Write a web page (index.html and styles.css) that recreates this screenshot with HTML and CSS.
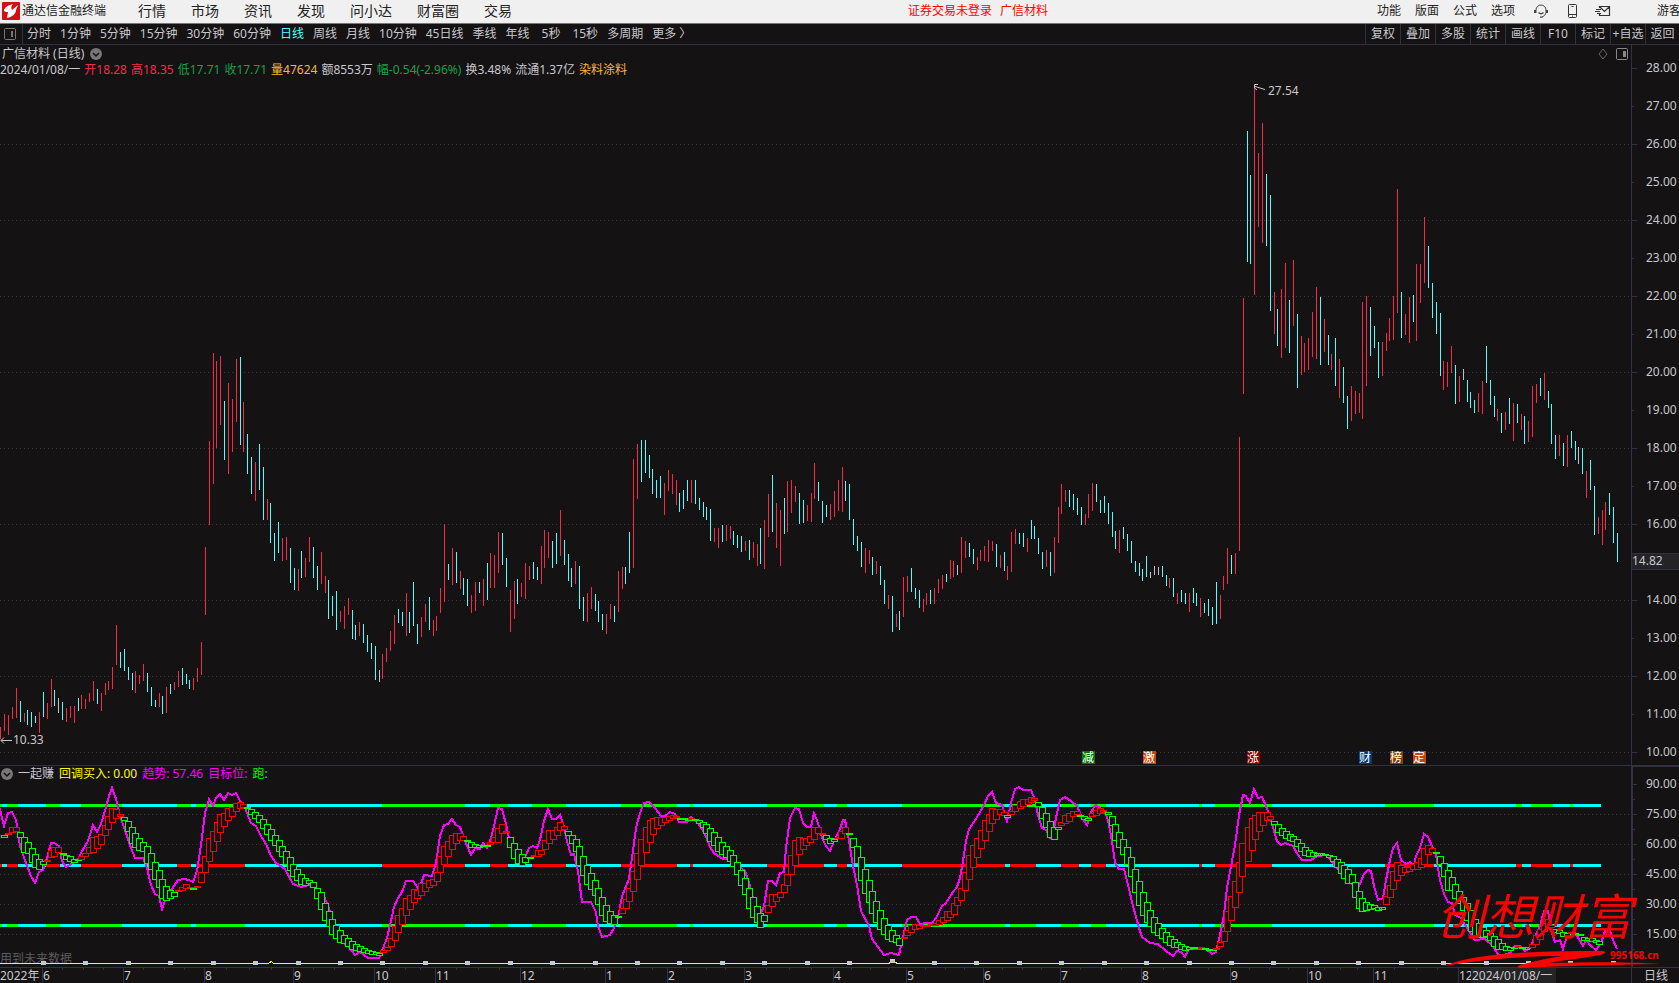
FILE: index.html
```html
<!DOCTYPE html>
<html lang="zh-CN">
<head>
  <meta charset="UTF-8">
  <meta name="viewport" content="width=device-width, initial-scale=1.0">
  <title>通达信金融终端</title>
  <link rel="stylesheet" href="styles.css">
</head>
<body>

  <header class="topbar">
    <div class="brand">
      <svg class="logo" viewBox="0 0 18 18" width="18" height="18">
        <rect width="18" height="18" rx="1" fill="#d40f14"/>
        <path d="M11 2 C7 3 3 5 2 8 C2 10 4 10 6 10 L5 16 C10 15 14 12 14 8 L16 3 L10 8 C9 6 9 4 11 2 Z" fill="#fff"/>
      </svg>
      <span>通达信金融终端</span>
    </div>
    <nav class="menu">
      <button>行情</button>
      <button>市场</button>
      <button>资讯</button>
      <button>发现</button>
      <button>问小达</button>
      <button>财富圈</button>
      <button>交易</button>
    </nav>
    <div class="status">
      <a href="#login">证券交易未登录</a>
      <a href="#stock">广信材料</a>
    </div>
    <div class="tools">
      <button>功能</button>
      <button>版面</button>
      <button>公式</button>
      <button>选项</button>
      <button class="icon first" aria-label="客服">
        <svg viewBox="0 0 16 16" width="16" height="16" fill="none" stroke="#444">
          <path d="M3 10 V7 A5 5 0 0 1 13 7 V10 Q12 13 9 14"/>
          <path d="M2 7 V10 M14 7 V10" stroke-width="2"/>
          <path d="M5.5 9.5 Q8 12 10.5 9.5 M7 14.2 H9.5" stroke-width="1.3"/>
        </svg>
      </button>
      <button class="icon" aria-label="手机">
        <svg viewBox="0 0 16 16" width="16" height="16" fill="none" stroke="#333">
          <rect x="4.5" y="1.5" width="8" height="13" rx="1"/>
          <path d="M4.5 11.5 H12.5 M7.5 3.5 H9.5 M8 13.2 H9"/>
        </svg>
      </button>
      <button class="icon" aria-label="邮件">
        <svg viewBox="0 0 16 16" width="16" height="16" fill="none" stroke="#333">
          <path d="M4.5 5 V3.5 H14.5 V12.5 H4.5 V11 M5 4 L9.5 8.5 L14 4" stroke-width="1.2"/>
          <path d="M1 6.5 H6 M0 8.5 H5 M2 10.5 H6"/>
        </svg>
      </button>
      <button class="guest">游客</button>
    </div>
  </header>

  <div class="toolbar">
    <button class="side" aria-label="侧栏">
      <svg viewBox="0 0 12 12" width="12" height="12" fill="none" stroke="#777">
        <rect x=".5" y=".5" width="11" height="11" rx="1"/>
        <rect x="7" y="3" width="2" height="6" fill="#777" stroke="none"/>
      </svg>
    </button>
    <nav class="periods">
      <button>分时</button>
      <button>1分钟</button>
      <button>5分钟</button>
      <button>15分钟</button>
      <button>30分钟</button>
      <button>60分钟</button>
      <button class="active">日线</button>
      <button>周线</button>
      <button>月线</button>
      <button>10分钟</button>
      <button>45日线</button>
      <button>季线</button>
      <button>年线</button>
      <button class="sec">5秒</button>
      <button class="sec">15秒</button>
      <button>多周期</button>
      <button>更多 〉</button>
    </nav>
    <div class="actions">
      <button>复权</button>
      <button>叠加</button>
      <button>多股</button>
      <button>统计</button>
      <button>画线</button>
      <button>F10</button>
      <button>标记</button>
      <button>+自选</button>
      <button>返回</button>
    </div>
  </div>

  <main>
    <section class="pane price">
      <svg class="chart" id="price" viewBox="0 45 1679 720"></svg>
      <div class="info">
        <div class="title">
          <span>广信材料 (日线)</span>
          <svg viewBox="0 0 12 12" width="12" height="12">
            <circle cx="6" cy="6" r="6" fill="#777"/>
            <path d="M3 5 L6 8 L9 5" fill="none" stroke="#141213" stroke-width="1.5"/>
          </svg>
        </div>
        <div class="quote">
          <span>2024/01/08/一</span>
          <span class="up">开18.28</span>
          <span class="up">高18.35</span>
          <span class="down">低17.71</span>
          <span class="down">收17.71</span>
          <span class="vol">量47624</span>
          <span>额8553万</span>
          <span class="down">幅-0.54(-2.96%)</span>
          <span>换3.48%</span>
          <span>流通1.37亿</span>
          <span class="vol">染料涂料</span>
        </div>
      </div>
      <div class="corner">
        <svg viewBox="0 0 10 12" width="10" height="12" fill="none" stroke="#666">
          <path d="M5 1 L9 6 L5 11 L1 6 Z"/>
        </svg>
        <svg viewBox="0 0 12 12" width="12" height="12" fill="none" stroke="#888">
          <rect x=".5" y=".5" width="11" height="11" rx="1"/>
          <rect x="7" y="3" width="3" height="6" fill="#888" stroke="none"/>
        </svg>
      </div>
    </section>

    <section class="pane trend">
      <svg class="chart" id="trend" viewBox="0 765 1679 218"></svg>
      <div class="legend">
        <svg viewBox="0 0 12 12" width="12" height="12">
          <circle cx="6" cy="6" r="6" fill="#777"/>
          <path d="M3 5 L6 8 L9 5" fill="none" stroke="#141213" stroke-width="1.5"/>
        </svg>
        <span>一起赚</span>
        <span class="yellow">回调买入: 0.00</span>
        <span class="magenta">趋势: 57.46</span>
        <span class="magenta">目标位:</span>
        <span class="lime">跑:</span>
      </div>
    </section>
  </main>

  <script src="chart.js"></script>
</body>
</html>
```
FILE: styles.css
```css
* {
  box-sizing: border-box;
}

body {
  margin: 0;
  height: 100vh;
  display: flex;
  flex-direction: column;
  overflow: hidden;
  background: #141213;
  color: #c8c8cc;
  font-family: "Noto Sans", "Noto Sans CJK SC", sans-serif;
  font-size: 12px;
  line-height: 16px;
}

button {
  margin: 0;
  padding: 0;
  border: none;
  background: none;
  color: inherit;
  font: inherit;
  white-space: nowrap;
  cursor: pointer;
}

svg {
  display: block;
}

/* top menu */
.topbar {
  display: flex;
  align-items: center;
  position: relative;
  flex: none;
  height: 24px;
  padding: 0 0 2px 2px;
  border-bottom: 1px solid #777;
  background: #f0f0f0;
  color: #222;
}

.brand {
  display: flex;
  align-items: center;
  gap: 2px;
}

.menu {
  display: flex;
  gap: 25px;
  margin-left: 32px;
  font-size: 14px;
}

.status {
  display: flex;
  gap: 8px;
  margin-left: 396px;
}

.status a {
  color: #f00;
  text-decoration: none;
}

.tools {
  display: flex;
  align-items: center;
  gap: 14px;
  margin-left: auto;
  margin-right: -2px;
}

.tools .first {
  margin-left: 4px;
}

.tools .icon + .icon {
  margin-left: 1px;
}

.tools .guest {
  margin-left: 32px;
}

/* period toolbar */
.toolbar {
  display: flex;
  align-items: stretch;
  flex: none;
  height: 21px;
  border-bottom: 1px solid #2f3240;
}

.side {
  width: 23px;
  padding-left: 4px;
  border-right: 1px solid #2f3240;
}

.periods {
  display: flex;
  gap: 9px;
  margin-left: 4px;
}

.periods .active {
  color: #54fcfc;
}

.periods .sec {
  padding-left: 3px;
}

.actions {
  display: flex;
  margin-left: auto;
}

.actions button {
  width: 35px;
  border-left: 1px solid #2f3240;
}

.actions button:last-child {
  width: 34px;
}

/* chart panes */
main {
  flex: 1;
  min-height: 0;
  display: flex;
  flex-direction: column;
}

.pane {
  position: relative;
  min-height: 0;
}

.price {
  flex: 720;
}

.trend {
  flex: 218;
}

.chart {
  width: 100%;
  height: 100%;
}

.chart text {
  fill: #c8c8cc;
  font-size: 12px;
}

.chart .mark {
  fill: #fff;
}

.chart .note {
  fill: #5c5c5c;
}

.chart .brush {
  fill: #f80400;
  font-size: 49px;
  font-style: italic;
}

.chart .site {
  fill: #f80400;
  font-size: 10px;
  font-weight: bold;
}

.crisp {
  shape-rendering: crispEdges;
}

.info {
  position: absolute;
  top: 1px;
  left: 0;
}

.title {
  display: flex;
  align-items: center;
  gap: 6px;
  padding-left: 2px;
}

.quote {
  display: flex;
  gap: 4px;
}

.up {
  color: #f52a48;
}

.down {
  color: #18a048;
}

.vol {
  color: #f5b840;
}

.corner {
  position: absolute;
  top: 3px;
  right: 51px;
  display: flex;
  gap: 8px;
}

.legend {
  position: absolute;
  top: 1px;
  left: 1px;
  display: flex;
  align-items: center;
  gap: 5px;
}

.yellow {
  color: #ff0;
}

.magenta {
  color: #f0f;
}

.lime {
  color: #0f0;
}
```
FILE: chart.js
```js
const NS = 'http://www.w3.org/2000/svg';
const priceSvg = document.getElementById('price');
const trendSvg = document.getElementById('trend');
const LINE = '#2f3240';

function add(parent, tag, attrs, text) {
  const el = document.createElementNS(NS, tag);
  for (const key in attrs) el.setAttribute(key, attrs[key]);
  if (text) el.textContent = text;
  parent.appendChild(el);
  return el;
}

function rect(parent, x, y, width, height, fill) {
  return add(parent, 'rect', { x, y, width, height, fill, class: 'crisp' });
}

function dots(parent, y) {
  add(parent, 'path', { d: `M0 ${y + 0.5}H1630`, stroke: '#343842', 'stroke-dasharray': '1 3', class: 'crisp' });
}

// values in each block are thirds of a chart unit, counted from the block's origin
const third = v => Math.floor(v / 3);

/* ---- daily high-low bars: colour+x, high, low ---- */
const bars = [
  [0, 340, `r1,1161,1197 r13,1122,1173 r25,1125,1185 r37,1101,1137 r49,1044,1134 c61,1083,1146 r73,1119,1146 c82,1110,1155
  c94,1116,1161 c106,1128,1149 r118,1116,1179 c130,1056,1131 r142,1089,1137 r154,1017,1101 c163,1050,1098 w175,1074,1119
  c187,1086,1140 r199,1104,1146 r211,1098,1134 r223,1098,1149 c235,1074,1113 r244,1065,1107 r256,1077,1107 r268,1059,1086
  r280,1023,1083 c292,1047,1092 r304,1059,1113 r316,1029,1065 r325,1023,1050 r337,981,1047 r349,855,975 c361,936,984
  c373,927,993 c385,981,1020 c397,999,1050 r406,993,1059 r418,1005,1032 r430,972,1023 c442,999,1056 c454,1041,1098
  c466,1080,1101 r478,1059,1101 c487,1068,1122 r499,1041,1119 c511,1032,1062 r523,1026,1050 r535,993,1041 c547,984,1035
  c559,1002,1032 c568,1020,1047 r580,1014,1050 r592,984,1026 r604,906,1005 r616,621,825 r628,303,555 r640,39,432
  r649,63,324 r661,48,255 c673,183,360 r685,129,402 r697,177,336 r709,57,246 c721,51,315 r730,186,336 c742,282,402
  c754,351,462 r766,366,483 c778,312,450 c790,381,540 r802,477,540 c811,489,609 c823,579,663 c835,546,639 r847,594,663
  r859,591,660 c871,624,729 c883,684,750 r895,687,753 c904,633,714 r916,654,711 r928,591,666 c940,621,714 c952,678,750
  r964,636,732 r976,708,759 c985,720,837 c997,768,828 c1009,753,870 r1021,813,846 r1033,798,867 r1045,774,825
  c1057,810,897 c1066,855,900 r1078,846,888 c1090,852,909 c1102,885,936 c1114,909,957 c1126,918,1020 w1138,990,1026
  r1147,942,1017 r1159,924,966 r1171,873,933 r1183,825,912 c1195,807,849 c1207,816,858 r1219,759,888 c1228,816,879
  c1240,726,858 c1252,852,912`],
  [400, 420, `r64,591,651 r76,552,606 c88,531,630 r100,600,648 r109,588,633 r121,504,579 r133,312,546 c145,432,480
  r157,384,495 c169,396,489 r181,453,507 c190,474,525 c202,477,558 r214,525,579 r226,486,573 c238,486,519 r250,477,558
  c262,429,540 r271,399,504 r283,405,504 r295,336,459 c307,339,435 c319,414,501 r331,510,636 r343,483,597 c352,477,552
  r364,489,531 r376,429,537 r388,438,480 c400,426,477 c412,441,480 r424,378,492 r433,330,444 r445,336,414 c457,363,444
  c469,339,432 r481,270,408 c493,360,435 c505,402,483 c514,444,501 r526,423,492 c538,438,567 c550,531,603 r562,519,606
  r574,501,567 c586,522,573 c595,543,606 c607,582,630 r619,582,642 r631,552,597 c643,558,606 r655,453,576 r667,441,507
  c676,441,492 c688,336,459 r700,117,444 r712,72,237 c724,60,186 c736,60,159 c748,105,174 c757,147,222 c769,180,234
  c781,168,234 r793,189,285 r805,150,213 r817,162,222 r829,180,255 c838,219,276 c850,210,267 c862,180,243 r874,180,249
  c886,180,252 c898,234,270 c910,246,291 c919,261,300 c931,267,363 r943,324,366 r955,324,384 c967,315,366 r979,315,363
  r991,318,357 c1000,333,375 c1012,345,384 c1024,348,396 r1036,363,393 c1048,360,420 r1060,366,414 r1072,372,438
  c1081,324,432 r1093,300,447 r1105,222,351 c1117,165,336 r1129,249,384 r1141,270,438 c1153,234,342 r1162,183,336
  r1174,180,279 r1186,198,246 c1198,219,312`],
  [800, 420, `c10,240,309 r22,255,303 r34,219,306 r43,129,237 c55,186,243 c67,243,309 c79,255,291 r91,252,300 r103,213,291
  r115,180,273 r127,141,276 c136,183,243 c148,192,300 c160,297,375 c172,348,393 c184,366,441 r196,384,459 r208,390,432
  c217,411,465 r229,423,462 c241,438,495 c253,480,552 r265,525,567 c277,528,636 r289,582,621 c298,573,630 r310,471,591
  r322,468,516 c334,444,516 c346,504,537 c358,510,564 r370,537,576 r379,519,555 c391,510,552 r403,504,552 r415,477,519
  r427,465,507 c439,462,486 r451,420,477 r460,423,471 w472,435,465 r484,351,459 r496,363,414 c508,369,411 c520,387,432
  r532,411,450 r541,390,423 r553,378,423 r565,360,426 r577,363,393 c589,372,441 r601,405,444 c613,396,453 r622,438,480
  r634,336,456 r646,327,372 c658,339,372 c670,339,381 r682,354,396 c694,300,357 c703,318,357 c715,354,402 c727,396,447
  r739,390,441 c751,396,468 r763,351,459 r775,261,369 r784,192,282 r796,210,246 c808,210,261 c820,222,270 c832,234,285
  c844,261,315 r856,282,315 r865,222,294 r877,189,273 c889,192,246 c901,240,279 c913,228,279 c925,249,312 c937,276,351
  c946,333,387 r958,330,399 c970,321,357 c982,342,393 c994,363,429 c1006,423,456 c1018,429,468 c1027,447,483
  c1039,408,471 w1051,456,474 w1063,438,465 w1075,441,465 c1087,438,471 c1099,465,498 r1108,474,504 c1120,474,531
  r1132,519,552 c1144,510,546 c1156,519,552 r1168,519,576 c1180,504,549 c1189,519,558 r1201,534,591 c1213,549,579
  c1225,537,588 c1237,561,615 c1249,486,612 r1261,525,597 r1270,468,510 r1282,384,492 c1294,405,462 r1306,399,462
  r1318,51,393`],
  [1200, 70, `r130,684,972 c142,183,576 c151,315,582 r163,51,675 r175,249,471 r187,159,519 c199,312,528 c211,375,723
  r223,666,792 c232,717,828 r244,657,864 r256,579,834 c268,690,849 r280,570,768 c292,732,954 r304,798,915 r313,819,906
  r325,804,900 r337,726,861 r349,651,867 c361,681,885 r373,747,846 c385,795,885 r394,852,900 c406,804,948 r418,867,984
  c430,891,999 c442,978,1077 r454,948,1053 r466,963,1032 r478,969,1029 r487,696,1047 r499,678,948 c511,711,858
  c523,768,834 c535,816,924 r547,816,918 r559,789,843 r568,744,813 r580,678,810 r592,357,729 c604,666,804 r616,732,795
  r628,681,819 c640,675,756 r649,582,813 r661,582,699 r673,441,639 c685,528,654 c697,639,744 c709,696,792 c721,729,918
  r730,873,960 r742,876,951 r754,828,909 c766,885,1002 r778,918,996 w790,897,930 c802,930,996 c811,966,1014
  c823,990,1029 r835,969,1026 r847,933,1032 c859,828,939 c871,930,1005 c883,978,1041 r892,1017,1053 c904,1029,1089
  r916,1026,1080 c928,984,1062 r940,999,1113 c952,1002,1059 r964,1032,1080 c973,1038,1122 r985,1053,1116 r997,948,1101
  r1009,942,999 c1021,924,978 r1033,909,990 c1045,963,1014 c1054,1002,1122 c1066,1095,1167 r1078,1095,1158
  c1090,1119,1188 r1102,1095,1191 c1114,1083,1134 c1126,1113,1170 w1135,1131,1182 c1147,1134,1212 r1159,1203,1284
  c1171,1170,1260 c1183,1248,1395 r1195,1341,1392 r1207,1320,1425 r1216,1296,1380 c1228,1269,1335 c1240,1311,1419
  c1252,1389,1476`]
];

const barColor = { r: '#f52a48', c: '#54fcfc', w: '#c0c0c8' };

for (let p = 10; p <= 28; p++) {
  const y = 752 - (p - 10) * 38;
  if (p % 2 === 0 && p < 28) dots(priceSvg, y);
  rect(priceSvg, 1632, y, p % 2 ? 2 : 5, 1, LINE);
  if (p !== 15) add(priceSvg, 'text', { x: 1646, y: y + 4 }, p.toFixed(2));
}
rect(priceSvg, 1631, 45, 1, 720, LINE);
rect(priceSvg, 1632, 553, 47, 17, '#242426');
rect(priceSvg, 1632, 553, 47, 1, LINE);
rect(priceSvg, 1632, 569, 47, 1, LINE);
add(priceSvg, 'text', { x: 1632, y: 565 }, '14.82');

for (const [ox, oy, list] of bars) {
  for (const item of list.trim().split(/\s+/)) {
    const [x, y1, y2] = item.slice(1).split(',').map(Number);
    rect(priceSvg, ox + third(x), oy + third(y1), 1, third(y2) - third(y1), barColor[item[0]]);
  }
}

add(priceSvg, 'path', { d: 'M1 740.5H12 M1 740.5L4 737.5 M1 740.5L4 743.5', stroke: '#c8c8cc', fill: 'none' });
add(priceSvg, 'text', { x: 13, y: 744 }, '10.33');
add(priceSvg, 'path', { d: 'M1255 86.5L1265 89.5 M1258 84.5H1254.5V88L1257 90', stroke: '#c8c8cc', fill: 'none' });
add(priceSvg, 'text', { x: 1268, y: 95 }, '27.54');

// event marks
for (const [x, label, color] of [
  [1082, '减', '#007800'], [1143, '激', '#c0480c'], [1247, '涨', '#8b0000'],
  [1359, '财', '#003a78'], [1390, '榜', '#804000'], [1413, '定', '#c0480c']
]) {
  rect(priceSvg, x, 751, 13, 13, color);
  add(priceSvg, 'text', { x, y: 762, class: 'mark' }, label);
}

/* ---- trend pane ---- */
rect(trendSvg, 0, 765, 1679, 1, LINE);
rect(trendSvg, 1632, 765, 47, 2, LINE);
rect(trendSvg, 1631, 765, 2, 202, LINE);
rect(trendSvg, 0, 967, 1679, 1, LINE);
rect(trendSvg, 1631, 967, 1, 16, LINE);

for (let v = 15; v <= 90; v += 15) {
  const y = 964 - v * 2;
  if (v < 90) dots(trendSvg, y);
  rect(trendSvg, 1633, y, 4, 1, LINE);
  rect(trendSvg, 1633, y + 15, 2, 1, LINE);
  add(trendSvg, 'text', { x: 1646, y: y + 4 }, v.toFixed(2));
}

add(trendSvg, 'text', { x: 0, y: 963, class: 'note' }, '用到未来数据');

// x where the trend flips, rising first
const flips = [0, 2, 7, 18, 46, 60, 81, 122, 177, 191, 196, 245, 382, 465, 490, 508, 532, 566, 621, 677, 690, 693, 767,
  824, 837, 847, 902, 1005, 1010, 1036, 1061, 1079, 1091, 1106, 1199, 1202, 1215, 1272, 1385, 1434, 1516, 1522, 1531,
  1553, 1570, 1573, 1601];

for (let i = 0; i < flips.length - 1; i++) {
  const rising = i % 2 === 0;
  const x = flips[i];
  const w = flips[i + 1] - x;
  rect(trendSvg, x, 804, w, 3, rising ? '#0f0' : '#0ff');
  rect(trendSvg, x, 864, w, 3, rising ? '#f00' : '#0ff');
  rect(trendSvg, x, 924, w, 3, rising ? '#0f0' : '#0ff');
}

add(trendSvg, 'path', {
  d: 'M0 963.5H268L270 962.5L271 961.5L274 963.5H889V962.5H896V963.5H1605',
  stroke: '#ff0', fill: 'none', class: 'crisp'
});
for (let i = 0; i < 38; i++) {
  rect(trendSvg, Math.round(41 + i * 297 / 7), i === 20 ? 959 : 961, 5, 4, '#c8c8c8');
}

const trendLines = [
  [0, 755, `0,160 4,178 13,213 24,175 38,173 50,195 60,275 80,325 95,365 106,384 118,352 130,345 142,310 154,266 163,264
  178,274 186,320 199,336 211,330 235,314 245,295 265,260 280,210 292,232 304,207 319,158 328,125 337,101 349,133 361,185
  380,235 394,280 406,309 430,309 442,340 454,392 466,418 478,425 487,462 499,430 517,402 535,376 552,372 568,375 580,383
  592,350 604,270 616,175 628,134 640,155 650,130 661,118 674,135 686,115 698,120 710,115 722,140 735,160 754,205 770,213
  785,245 800,268 814,305 830,325 856,343 880,388 905,397 928,392 950,400 972,425 990,468 1003,520 1020,555 1045,575
  1066,600 1080,592 1105,611 1138,611 1150,580 1163,550 1175,500 1183,458 1195,430 1207,412 1219,378 1241,380 1255,400`],
  [420, 755, `0,397 14,360 38,363 48,325 60,245 72,210 86,207 97,193 110,210 122,217 135,260 155,300 166,281 182,282
  190,265 202,281 214,250 224,215 235,160 247,163 259,208 268,250 285,275 305,320 318,300 328,280 340,273 353,279 362,255
  374,200 385,162 398,194 410,194 421,181 432,215 443,260 454,302 464,298 475,350 488,443 514,443 528,472 536,515 546,546
  570,541 583,520 595,490 607,425 628,372 638,310 648,220 660,175 674,145 688,143 705,160 724,183 736,183 750,173 765,177
  778,201 803,201 815,187 835,205 857,237 872,278 884,296 910,312 930,312 945,325 975,350 990,395 1000,430 1015,465
  1022,480 1034,455 1044,380 1056,378 1068,392 1080,355 1092,353 1100,280 1112,190 1125,161 1137,163 1150,205 1161,216
  1174,216 1183,175 1196,205 1206,250 1218,275 1230,288 1242,260 1252,240`],
  [840, 755, `0,222 9,195 17,195 26,240 40,335 53,390 64,468 88,515 98,552 115,578 132,600 155,596 178,600 186,560
  202,497 215,486 228,487 240,508 262,505 276,506 290,490 307,453 320,445 340,412 352,397 362,370 370,320 380,258 387,222
  403,203 420,172 433,152 444,124 456,112 468,145 486,150 501,198 514,145 525,104 539,98 550,106 573,105 586,135 596,180
  606,220 620,225 632,250 643,220 651,175 662,135 676,127 694,138 712,155 728,190 743,210 757,165 768,150 782,160 797,172
  806,195 818,260 826,325 838,342 852,344 864,390 880,455 897,520 908,548 932,566 956,567 978,588 1001,603 1013,590
  1023,592 1035,606 1048,580 1075,582 1100,584 1118,597 1130,592 1142,540 1152,480 1162,400 1178,320 1187,270 1197,180
  1209,122`],
  [1240, 740, `10,167 20,168 31,190 43,149 54,174 68,172 80,200 94,240 103,275 113,303 125,315 137,311 160,320 175,345
  188,362 215,362 232,348 262,347 285,378 305,400 325,425 343,440 358,438 373,404 385,391 394,393 403,440 415,480 430,475
  440,420 450,360 460,325 472,309 485,360 500,372 512,368 522,375 530,350 541,325 553,282 565,292 578,318 590,345 602,420
  612,462 625,488 636,490 646,525 665,535 682,565 705,600 735,598 760,620 773,640 785,648 800,642 812,640 825,620 840,618
  855,635 870,625 885,590 900,560 912,515 925,515 935,570 947,607 960,600 970,627 982,590 1005,580 1018,598 1029,620
  1040,602 1055,620 1070,630 1085,610 1095,575 1110,570 1120,600 1132,627`]
];

const trendPoints = [];
for (const [ox, oy, list] of trendLines) {
  for (const item of list.trim().split(/\s+/)) {
    const [x, y] = item.split(',').map(Number);
    trendPoints.push(`${ox + third(x)},${oy + third(y)}`);
  }
}
add(trendSvg, 'polyline', {
  points: trendPoints.join(' '), fill: 'none', stroke: '#f0f', 'stroke-width': 2, class: 'crisp'
});

/* ---- boxes: colour+centre, top, bottom ---- */
const boxes = [
  [0, 755, `g13,240,248 r25,235,239 r37,217,232 r49,217,229 g61,231,248 g73,246,291 g85,262,295 g97,280,322 g106,297,338
  g118,313,344 g130,320,329 r142,316,319 r154,285,307 r163,278,304 r175,277,292 g190,294,299 g199,300,312 g211,305,318
  g223,313,322 g235,313,317 r244,304,313 r256,295,305 r268,276,295 r280,247,293 r292,244,280 r304,237,268 r316,212,240
  r325,185,223 r337,160,202 r349,163,191 r361,179,185 g373,187,196 g385,199,229 g397,217,265 g406,235,277 g418,250,285
  g430,262,290 g442,274,325 g454,295,343 g466,322,373 g478,346,397 g487,373,430 g499,393,435 g511,405,430 g523,412,424
  r535,406,409 r547,398,407 r559,389,400 r571,397,399 g580,401,403 r592,394,398 r604,352,382 r616,304,352 r628,250,319
  r640,229,289 r652,202,259 r661,178,232 r673,175,214 r685,160,196 r697,157,185 r709,144,169 r721,142,160 r730,149,157
  g742,157,161 g754,163,178 g766,172,190 g778,181,202 g790,193,220 g802,208,238 g814,223,256 g826,241,270 g838,256,289
  g847,274,304 g859,289,328 g871,307,345 g880,328,364 g892,343,376 g904,358,388 g916,370,391 g928,376,385 g940,382,396
  g952,400,430 g964,412,463 g976,445,496 g988,470,515 g997,493,538 g1009,510,550 g1021,527,562 g1033,541,565
  g1045,550,575 g1057,559,583 g1069,568,586 g1081,574,589 g1093,580,592 g1105,586,595 g1117,589,597 g1129,592,599
  g1138,594,602 r1150,586,593 r1162,577,586 r1174,550,574 r1186,514,556 r1195,481,533 r1207,460,508 r1219,430,482
  r1231,421,463 r1243,403,442 r1252,407,430`],
  [420, 755, `r5,385,422 r17,385,409 r29,376,397 r41,373,391 r52,352,379 r62,304,352 r73,274,328 r85,259,304 r97,241,283
  r109,236,265 r121,236,256 r130,244,256 g142,256,259 g154,262,276 g166,268,277 g178,271,277 g190,271,274 g202,271,274
  r211,262,268 r223,247,262 r235,220,262 r247,208,234 r259,229,232 g271,247,277 g283,265,310 g295,283,325 g307,298,331
  g316,307,322 g330,306,308 r343,301,304 r355,286,303 r364,286,298 r376,256,283 r388,226,265 r400,226,253 r412,217,240
  r421,202,226 r433,214,223 g445,229,241 g457,241,265 g469,253,289 g478,273,331 g490,304,360 g502,331,388 g514,355,403
  g526,376,421 g535,400,448 g547,427,480 g559,451,499 g571,469,505 g583,481,508 g595,484,487 r607,460,475 r619,433,460
  r628,400,440 r640,350,409 r652,295,373 r664,253,331 r678,217,292 r690,196,262 r700,190,238 r712,187,220 r724,187,211
  r736,187,202 r748,184,196 r760,181,189 r769,184,187 g781,190,194 g793,191,194 g805,193,196 r815,190,192 g826,193,196
  g838,196,205 g850,202,217 g860,208,235 g872,220,258 g884,232,271 g895,247,288 g907,262,298 g919,274,308 g931,286,318
  g940,301,334 g952,322,358 g964,346,391 g976,370,418 g988,400,460 g1000,427,487 g1012,454,502 g1021,475,517
  g1033,481,499 r1045,451,472 r1057,418,454 r1069,418,439 r1081,412,427 r1092,388,412 r1102,358,391 r1114,301,358
  r1126,256,331 r1138,247,298 r1150,250,283 r1160,250,271 r1172,244,262 r1184,217,254 r1195,217,236 r1207,234,236
  g1219,241,253 g1231,250,265 g1243,253,259 r1255,247,250`],
  [840, 755, `r5,230,250 r17,217,235 g29,235,237 g41,250,277 g53,274,325 g65,307,376 g77,343,415 g89,376,442 g98,409,475
  g110,439,502 g122,466,523 g133,490,538 g145,511,553 g157,526,558 g169,541,562 g179,550,571 r193,548,550 r203,526,541
  r215,510,532 r227,508,523 r239,512,520 r250,511,515 r262,511,514 r274,508,511 r285,505,512 r297,496,508 r309,487,502
  r321,469,496 r331,469,487 r343,445,478 r353,427,451 r365,400,436 r377,352,406 r389,301,373 r401,271,337 r413,250,307
  r423,226,280 r435,196,256 r447,178,229 r458,160,205 r470,163,193 r482,163,178 r493,173,180 g503,181,187 r515,169,178
  r527,151,169 r541,139,160 r551,133,155 r565,133,148 r575,128,142 r584,130,136 g596,142,154 g608,157,190 g620,175,217
  g632,199,247 g644,217,254 g656,217,223 r665,202,211 r677,181,205 r689,175,199 r700,169,184 r712,170,178 g722,181,184
  g734,185,192 g745,189,196 r757,175,184 r769,166,181 r780,160,175 r790,167,172 g806,172,178 g818,184,211 g827,208,256
  g839,232,278 g851,253,298 g863,277,328 g873,307,364 g885,343,412 g897,379,450 g909,412,481 g921,442,502 g930,466,514
  g942,487,532 g954,505,541 g966,519,550 g978,532,562 g990,544,571 g1002,553,577 g1013,562,577 g1025,568,583
  g1037,574,586 g1049,576,583 g1060,577,581 g1072,578,580 r1085,577,579 g1096,580,583 g1108,582,586 g1120,583,586
  r1129,579,581 r1141,562,574 r1153,529,559 r1162,469,529 r1173,424,496 r1185,379,457 r1197,322,412`],
  [1240, 740, `r8,310,409 r25,262,364 r37,235,331 r46,226,298 r58,217,274 r70,217,256 r82,217,240 r91,229,238 g103,244,253
  g115,253,276 g127,265,286 g139,273,295 g151,283,300 g160,289,304 g172,298,319 g184,310,333 g196,322,345 g208,331,349
  g220,337,349 g232,340,345 g244,341,345 g256,343,347 g268,345,352 g280,349,364 g292,358,382 g304,367,400 g313,376,415
  g325,388,431 g337,403,430 g346,427,472 g358,454,505 g367,475,514 g379,487,511 g391,492,508 g403,496,505 g415,502,511
  g427,503,508 r439,469,493 r451,436,472 r461,394,448 r473,367,420 r485,376,406 r497,382,397 r509,382,394 r521,373,388
  r532,367,388 r544,355,382 r553,325,373 r565,316,343 r577,325,337 g590,336,338 g602,349,373 g613,370,409 g625,391,451
  g636,412,451 g646,433,475 g658,454,490 g670,472,511 g682,490,541 g694,511,574 g705,537,590 g717,550,592 g729,562,592
  g740,571,589 g752,580,601 g763,589,619 g775,598,628 g787,610,628 g799,619,631 g810,622,631 g822,622,626 r834,619,622
  g846,622,625 g858,623,628 r877,612,622 r889,586,613 r901,568,598 r912,550,575 r924,538,565 r934,556,563 g946,568,577
  g958,572,580 g970,577,589 g982,580,590 r993,578,580 g1005,580,583 g1020,582,587 g1032,592,601 g1044,595,601
  g1056,595,604 g1068,601,607 g1077,604,613`]
];

for (const [ox, oy, list] of boxes) {
  for (const item of list.trim().split(/\s+/)) {
    const [x, top, bottom] = item.slice(1).split(',').map(Number);
    add(trendSvg, 'rect', {
      x: ox + third(x) - 2.5, y: oy + third(top) + 0.5, width: 6, height: Math.max(1, third(bottom) - third(top)),
      fill: bottom - top > 5 ? '#141213' : 'none', stroke: item[0] === 'r' ? '#f00' : '#0f0', class: 'crisp'
    });
  }
}

/* ---- time axis ---- */
const months = [[42, '6'], [123, '7'], [204, '8'], [293, '9'], [374, '10'], [435, '11'], [520, '12'], [605, '1'], [667, '2'],
  [744, '3'], [833, '4'], [906, '5'], [983, '6'], [1060, '7'], [1141, '8'], [1230, '9'], [1307, '10'], [1373, '11'], [1458, '12']];

add(trendSvg, 'text', { x: 0, y: 980 }, '2022年');
rect(trendSvg, 20, 967, 1, 3, LINE);
months.forEach(([x, label], i) => {
  rect(trendSvg, x, 967, 1, 16, LINE);
  add(trendSvg, 'text', { x: x + 1, y: 980 }, label);
  const next = months[i + 1];
  for (let k = 1; next && k < 4; k++) {
    rect(trendSvg, Math.round(x + (next[0] - x) * k / 4), 967, 1, 3, LINE);
  }
});
rect(trendSvg, 1471, 968, 85, 15, '#242426');
add(trendSvg, 'text', { x: 1472, y: 980 }, '2024/01/08/一');
add(trendSvg, 'text', { x: 1644, y: 980 }, '日线');

/* ---- site stamp ---- */
add(trendSvg, 'text', { x: 1436, y: 935, class: 'brush' }, '创想财富');
add(trendSvg, 'path', {
  d: 'M1444 966 C1475 953 1530 951 1602 951 Q1610 952 1600 955 C1580 959 1562 960 1550 963 C1590 962 1630 962 1660 964 C1610 965 1560 966 1522 968 Q1514 968 1520 965 C1535 961 1550 958 1562 956 C1520 956 1480 960 1444 966 Z',
  fill: '#f80400'
});
add(trendSvg, 'text', { x: 1610, y: 959, class: 'site' }, '995168.cn');
```
